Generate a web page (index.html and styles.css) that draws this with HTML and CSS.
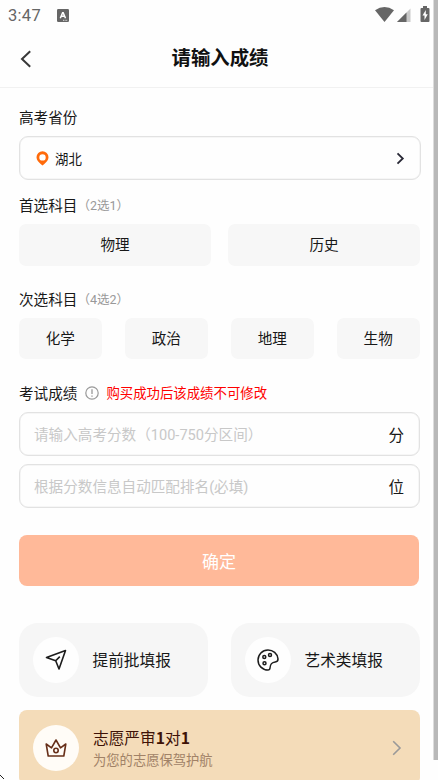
FILE: index.html
```html
<!DOCTYPE html>
<html lang="zh-CN">
<head>
<meta charset="utf-8">
<title>请输入成绩</title>
<link rel="stylesheet" href="styles.css">
</head>
<body>
<div class="screen">
  <div class="status">
    <span class="clock">3:47</span>
    <svg class="lang" width="12" height="13" viewBox="0 0 12 13"><rect width="12" height="13" rx="1.3" fill="#666"/><path d="M3.3 9.2 5.6 3.8h.6l2.3 5.4M4.2 7.3h3.4" fill="none" stroke="#fff" stroke-width="1.5"/><path d="M6 11.3h4.5" stroke="#fff" stroke-width=".8" stroke-dasharray="1 .6"/></svg>
    <svg class="signals" width="55" height="17" viewBox="0 0 55 17"><path d="M0 4.2Q9.5-2.3 19 4.2L9.500 16Z" fill="#666"/><path d="M35.500 2.500V16H22Z" fill="#c9c9c9"/><path d="M31.500 6.500V16H22Z" fill="#666"/><path d="M46.500 2H48V0h4v2h1.500q1 0 1 1v12q0 1-1 1h-7q-1 0-1-1V3q0-1 1-1Z" fill="#666"/><path d="M50.800 4 47.500 9.500h2V14l3.300-5.800h-2Z" fill="#fff"/></svg>
  </div>
  <header class="header">
    <svg class="back" width="12" height="18" viewBox="0 0 12 18"><path d="M10.200 1.200 2 9l8.200 7.800" fill="none" stroke="#383838" stroke-width="2"/></svg>
    <h1>请输入成绩</h1>
  </header>
  <main>
    <div class="label label-province">高考省份</div>
    <div class="field province">
      <svg width="13" height="15" viewBox="0 0 13 15"><path fill="#ff6a0a" fill-rule="evenodd" d="M6.500.3a6 6 0 0 0-6 6c0 3.100 2.100 5 4.200 6.600L6.500 14.500l1.800-1.600c2.100-1.600 4.200-3.500 4.200-6.600a6 6 0 0 0-6-6Zm0 2.900a3.200 3.200 0 1 1 0 6.400 3.200 3.200 0 0 1 0-6.400Z"/></svg>
      <span>湖北</span>
      <svg class="chevron" width="9" height="13" viewBox="0 0 9 13"><path d="m1.500 1.300 5.300 5.200-5.300 5.200" fill="none" stroke="#292936" stroke-width="1.800"/></svg>
    </div>
    <div class="label label-first">首选科目<small>（2选1）</small></div>
    <div class="options options-two"><div>物理</div><div>历史</div></div>
    <div class="label label-second">次选科目<small>（4选2）</small></div>
    <div class="options options-four"><div>化学</div><div>政治</div><div>地理</div><div>生物</div></div>
    <div class="label label-score">考试成绩
      <svg width="14" height="14" viewBox="0 0 14 14"><circle cx="7" cy="7" r="6.200" fill="none" stroke="#999" stroke-width="1.200"/><path d="M7 3.300v4.800M7 9.400v1.300" stroke="#999" stroke-width="1.300"/></svg>
      <em>购买成功后该成绩不可修改</em>
    </div>
    <div class="field score"><span>请输入高考分数（100-750分区间）</span><b>分</b></div>
    <div class="field score"><span>根据分数信息自动匹配排名(必填)</span><b>位</b></div>
    <div class="submit">确定</div>
    <div class="cards">
      <div class="card">
        <i class="disc"><svg width="24" height="24" viewBox="0 0 24 24"><path d="M2.500 9.500 21.500 2.500 15 21l-3.300-8.200ZM11.700 12.800l4.100-4.200" fill="none" stroke="#1c1c1c" stroke-width="1.600" stroke-linejoin="round"/></svg></i>
        <span>提前批填报</span>
      </div>
      <div class="card">
        <i class="disc"><svg width="24" height="24" viewBox="0 0 24 24"><g fill="none" stroke="#1c1c1c" stroke-width="1.500"><path d="M22 10.800C21.400 5.500 17 2 12 2 6.300 2 2 6.500 2 12c0 5.600 4.400 10 10 10 1.300 0 1.900-.8 2-2 .3-3.900 1.300-5.500 5.200-6 1.900-.2 3-1.200 2.800-3.200Z" stroke-linejoin="round"/><circle cx="8.300" cy="9" r="1.500"/><circle cx="14" cy="7" r="1.500"/><circle cx="8.500" cy="15.200" r="1.500"/></g></svg></i>
        <span>艺术类填报</span>
      </div>
    </div>
    <div class="banner">
      <i class="disc"><svg width="24" height="24" viewBox="0 0 24 24"><g fill="none" stroke="#672f19" stroke-width="1.600" stroke-linejoin="round"><path d="M4.200 20 2.200 8l5.300 3.800L12 4l4.500 7.800L21.800 8l-2 12Z"/><circle cx="12" cy="14.500" r="2.200"/></g></svg></i>
      <div class="copy"><strong>志愿严审<b>1</b>对<b>1</b></strong><span>为您的志愿保驾护航</span></div>
      <svg class="arrow" width="10" height="16" viewBox="0 0 10 16"><path d="m1.200 1.200 6.800 6.800-6.800 6.800" fill="none" stroke="#999" stroke-width="1.600"/></svg>
    </div>
  </main>
  <div class="scrollbar"></div>
  <svg class="corner" width="5" height="5" viewBox="0 0 5 5"><path d="M0 0h1v1h1v1h1v1H2V2H1V1H0ZM3 3h1v1H3Z" fill="#222"/></svg>
</div>
</body>
</html>
```
FILE: styles.css
```css
* { box-sizing: border-box; }
body { margin: 0; background: #fefefe; color: #181818; font-family: Roboto, "Noto Sans CJK SC", sans-serif; }
svg { display: block; flex: none; }
.screen { position: relative; width: 438px; height: 780px; overflow: hidden; }
.status { display: flex; height: 30px; padding: 0 8px 0 8px; align-items: center; color: #666; }
.clock { width: 49px; margin-top: 1px; font-size: 16.5px; line-height: 30px; letter-spacing: .3px; }
.signals { margin: -2px 0 0 auto; }
.header { display: flex; height: 58px; padding: 0 21px 0 20px; align-items: center; border-bottom: 1px solid #f1f1f1; }
.header h1 { flex: 1; margin: 0 9px 0 0; text-align: center; font-size: 19.4px; line-height: 28px; font-weight: 700; color: #111; }
main { padding: 0 18px 0 19px; }
.label { display: flex; align-items: center; height: 24px; font-size: 14.6px; line-height: 24px; white-space: nowrap; }
.label small { font-size: 12.5px; color: #999; }
.label em { font-style: normal; font-size: 13.4px; color: #f00; margin-left: 7px; }
.label svg { margin: -2px 0 0 8px; }
.label-province { margin: 18px 0 7px; }
.label-first { margin: 14px 0 6px; }
.label-second { margin: 22px 0 6px; }
.label-score { margin: 23px 0 6px; }
.field { display: flex; align-items: center; height: 44px; border: 1px solid #e2e2e2; border-radius: 9px; box-shadow: inset 0 0 0 .5px #eee; }
.province { height: 44px; margin: -1px -1px 1px 0; padding: 0 15px 0 16px; font-size: 13.4px; }
.province span { margin-left: 6px; }
.chevron { margin-left: auto; }
.options { display: flex; font-size: 14.6px; }
.options div { flex: 1; display: flex; align-items: center; justify-content: center; padding-bottom: 3px; background: #f7f7f7; border-radius: 7px; }
.options-two { height: 42px; gap: 17px; }
.options-four { height: 41px; gap: 23.3px; margin-right: .5px; }
.options-four div { padding-bottom: 2px; }
.score { justify-content: space-between; padding: 0 15px 2px 15px; margin: 0 0 8px 0; font-size: 14.6px; color: #c8c8c8; }
.score span { margin-left: -1px; }
.score b { margin-top: 2px; font-weight: 400; font-size: 15.5px; color: #181818; }
.submit { display: flex; align-items: center; justify-content: center; height: 51px; margin: 27px 1px 37px 0; border-radius: 8px; background: #ffb999; color: #fff; font-size: 17px; }
.cards { display: grid; grid-template-columns: 1fr 1fr; gap: 23px; }
.card { display: flex; align-items: center; height: 74px; padding-left: 14px; border-radius: 19px; background: #f6f6f6; font-size: 15.7px; }
.card span { margin: -1px 0 0 -.5px; }
.disc { display: flex; flex: none; align-items: center; justify-content: center; width: 46px; height: 46px; margin-right: 14px; border-radius: 50%; background: #fefefe; }
.banner { display: flex; align-items: center; height: 75px; margin: 13px 0 0 0; padding: 0 18px 0 14px; border-radius: 8px; background: #f4dcb9; }
.banner .disc { background: #fffcf7; }
.copy { display: flex; flex-direction: column; margin-top: 2px; color: #3e1207; }
.copy strong { font-size: 15.7px; line-height: 22px; font-weight: 400; }
.copy b { font-family: "Noto Sans CJK SC", sans-serif; font-weight: 700; }
.copy span { font-size: 13.3px; line-height: 21px; color: #a18267; }
.arrow { margin-left: auto; }
.scrollbar { position: absolute; top: 0; right: 0; width: 5px; height: 760px; background: #b8b8b8; border-left: 1px solid #dcdcdc; }
.corner { position: absolute; left: 0; bottom: 0; }
```
